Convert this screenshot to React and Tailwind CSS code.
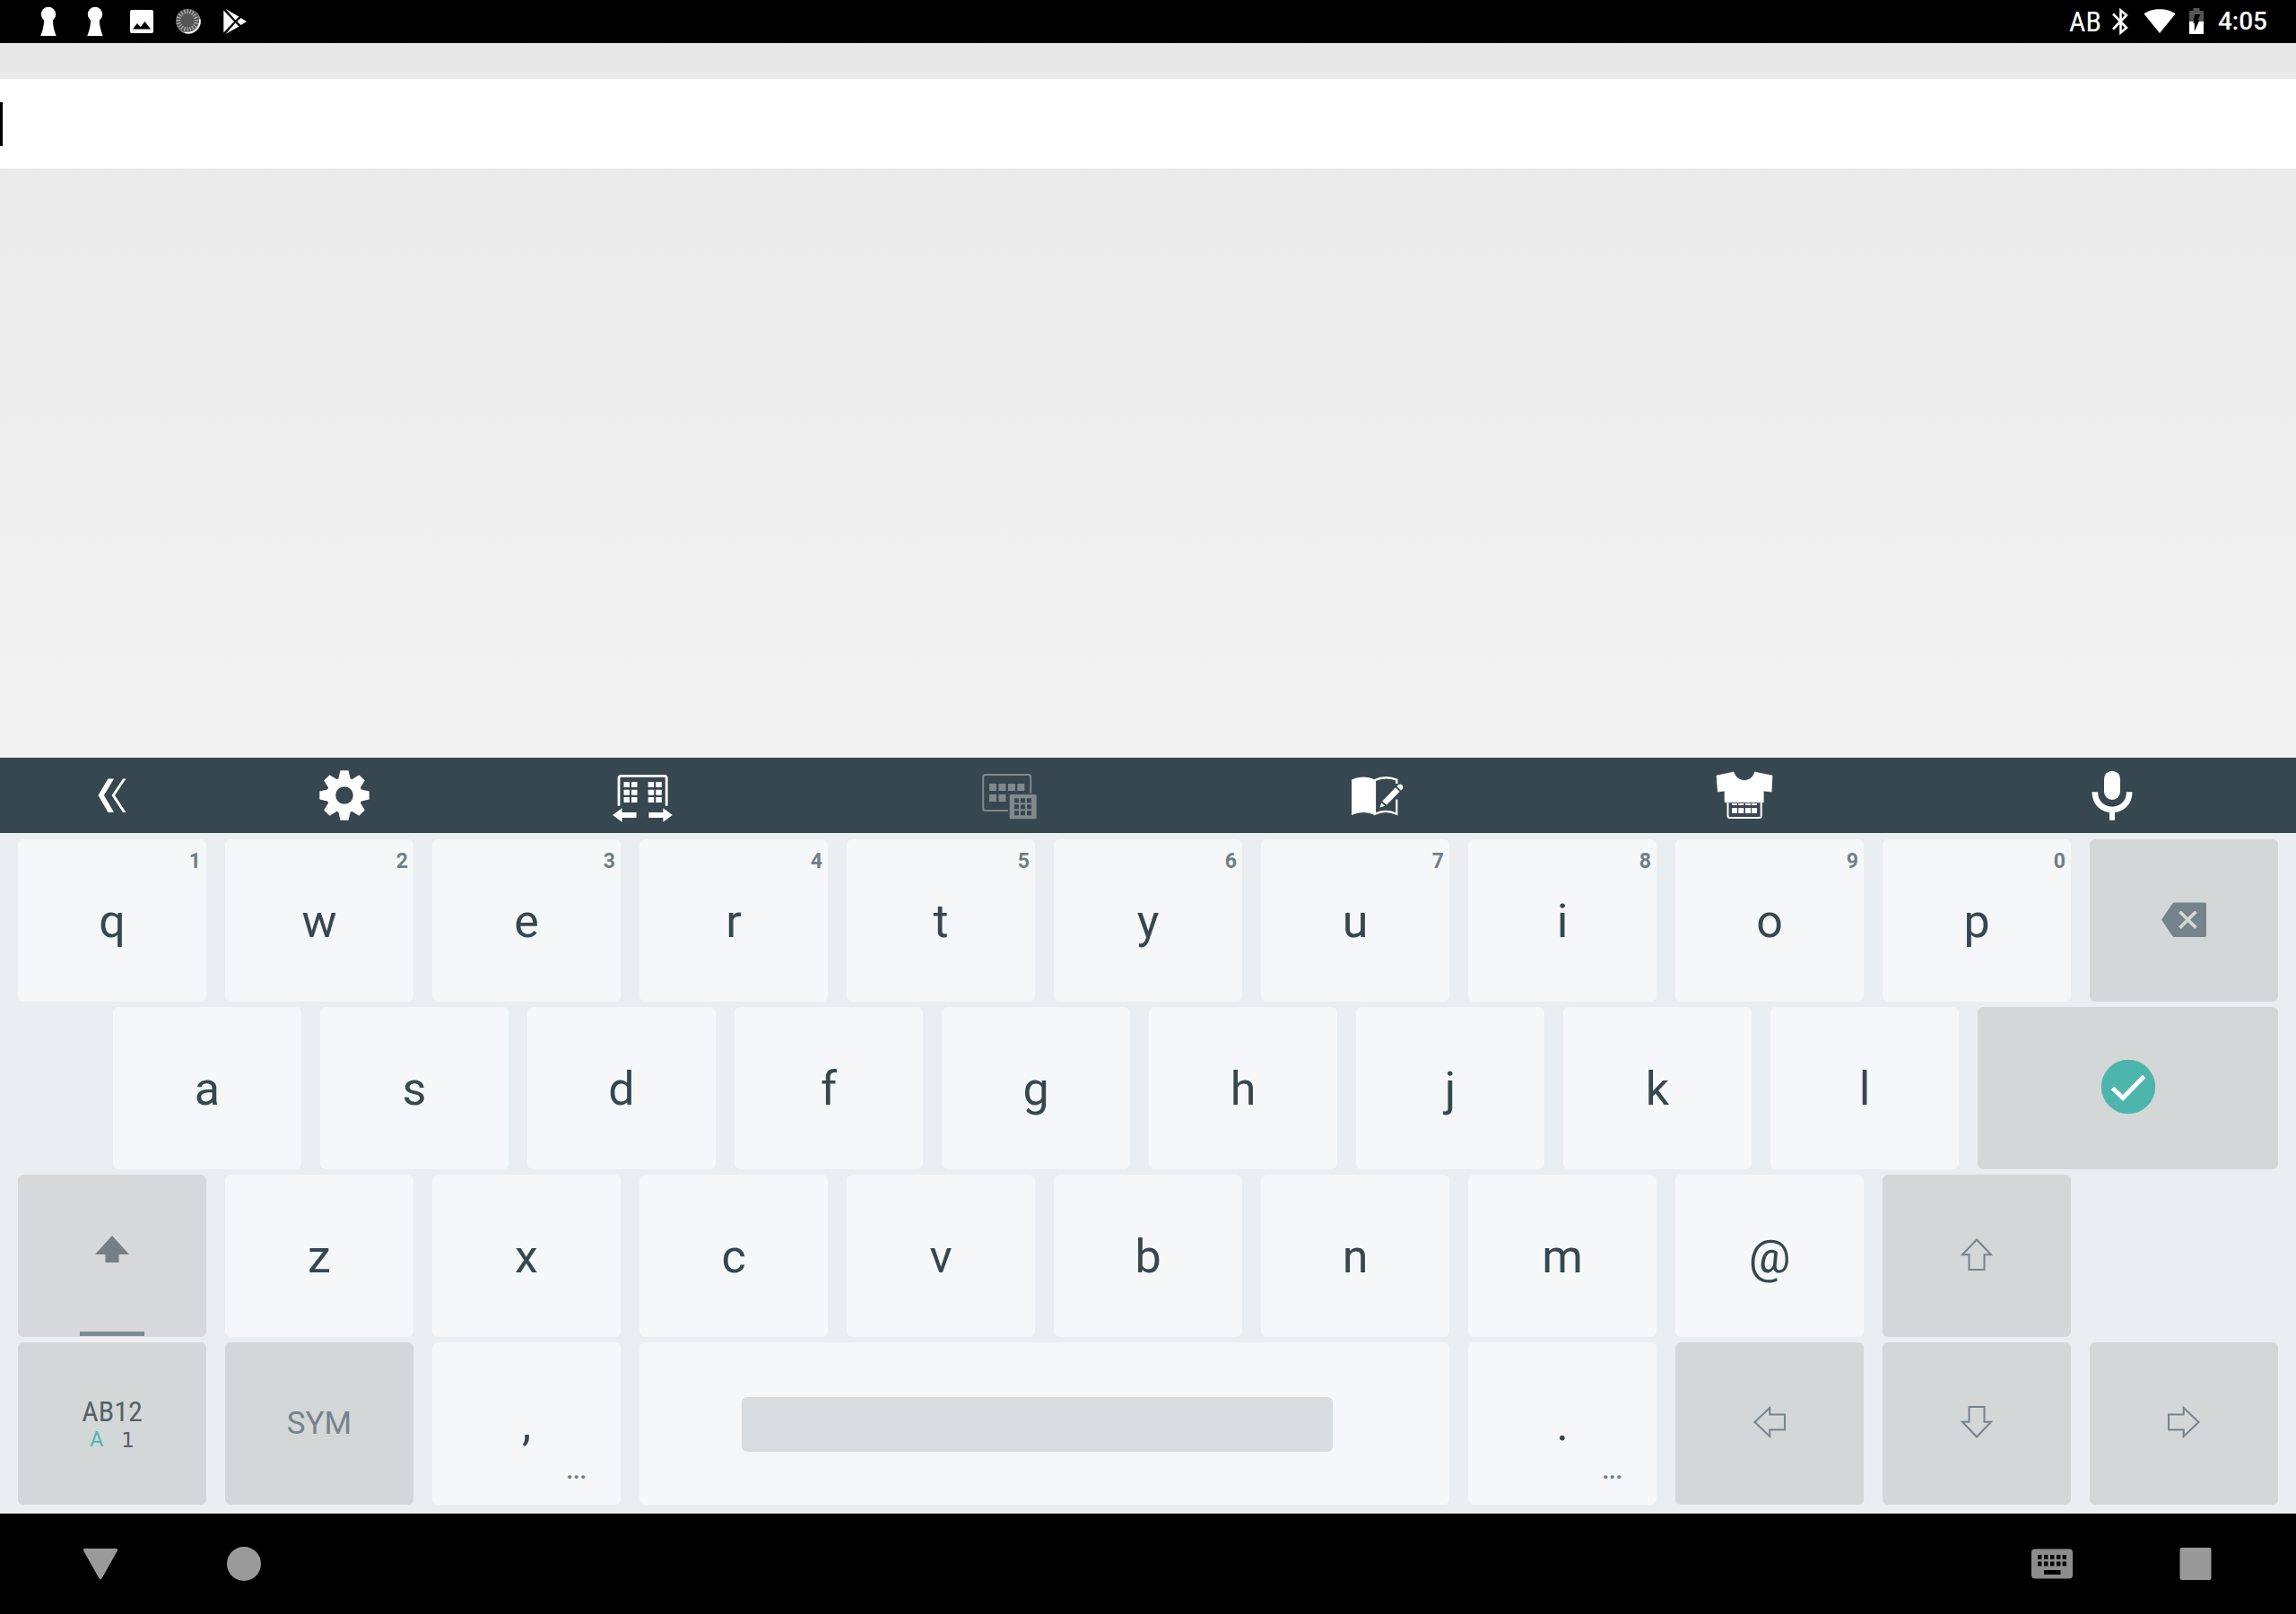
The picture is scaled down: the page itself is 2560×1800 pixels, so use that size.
import React from "react";

const TEETH = [0, 45, 90, 135, 180, 225, 270, 315];
const TICKS = Array.from({ length: 20 }, (_, i) => i * 18);

/* ---------- status bar icons ---------- */

function KeyholeIcon() {
  return (
    <svg className="h-12 w-[52px]" viewBox="0 0 52 48" fill="#fff" aria-hidden="true">
      <circle cx="26" cy="16" r="8.2" />
      <path d="M21 20h10c-.5 8 1.500 14 3.700 20H17.300C19.500 34 21.500 28 21 20z" />
    </svg>
  );
}

function PictureIcon() {
  return (
    <svg className="h-12 w-[52px]" viewBox="0 0 52 48" aria-hidden="true">
      <rect x="13" y="11" width="26" height="26" rx="2" fill="#fff" />
      <path d="M16 32.500 21 26l3.800 4L29.500 24 36 32.500z" fill="#000" />
    </svg>
  );
}

function DialIcon() {
  return (
    <svg className="h-12 w-[52px]" viewBox="0 0 52 48" aria-hidden="true">
      <circle cx="26" cy="24" r="13.800" fill="#8a8a8a" />
      <path d="M38.300 21.500a12.500 12.500 0 0 1-16.300 14" fill="none" stroke="#fff" strokeWidth="2.400" />
      <circle cx="25" cy="22.800" r="13" fill="#555" />
      <g stroke="#b5b5b5" strokeWidth="1.200">
        {TICKS.map((a) => (
          <path key={a} d="M25 10.300v4.700" transform={`rotate(${a} 25 22.800)`} />
        ))}
      </g>
    </svg>
  );
}

function PlayStoreIcon() {
  return (
    <svg className="h-12 w-[52px]" viewBox="0 0 52 48" aria-hidden="true">
      <g fill="#fff">
        <path d="M13.300 11.500 25 24 13.300 36.500z" />
        <path d="M15.500 10 30.500 18.500 26.500 22.500z" />
        <path d="M15.500 38 30.500 29.500 26.500 25.500z" />
        <path d="M28.300 24 32.500 20 39 24l-6.500 4z" />
      </g>
    </svg>
  );
}

function BluetoothIcon() {
  return (
    <svg className="h-12 w-[18px]" viewBox="0 0 18 48" fill="none" stroke="#fff" strokeWidth="2.600" aria-hidden="true">
      <path d="M1 15.500 16 31l-6.500 5.500v-25L16 17 1 32.500" />
    </svg>
  );
}

function WifiIcon() {
  return (
    <svg className="h-12 w-9" viewBox="0 0 36 48" fill="#fff" aria-hidden="true">
      <path d="M.5 15.500C9 8.500 27 8.500 35.500 15.500L18 37z" />
    </svg>
  );
}

function BatteryIcon() {
  return (
    <svg className="h-12 w-4" viewBox="0 0 16 48" aria-hidden="true">
      <path d="M4.500 9h7v3H15q1 0 1 1v11H0V13q0-1 1-1h3.500z" fill="#555" />
      <path d="M0 24h16v13q0 1-1 1H1q-1 0-1-1z" fill="#fff" />
      <path d="M6 16h6.500L9.500 22.500H11.500L5.800 35V26H4.500z" fill="#000" />
    </svg>
  );
}

/* ---------- toolbar icons ---------- */

function CollapseIcon() {
  return (
    <svg className="size-16" viewBox="93 855 64 64" fill="#fff" aria-hidden="true">
      <path d="M120.500 868.500h6.500L116 887l11 19h-6.500L109.500 887z" />
      <path d="M137 868.500h3.500L128 887l12.500 19H137L124.500 887z" />
    </svg>
  );
}

function GearIcon() {
  return (
    <svg className="ml-2 size-16" viewBox="-32 -32 64 64" aria-hidden="true">
      <g fill="#fff">
        <circle r="19.800" />
        {TEETH.map((a) => (
          <path key={a} d="M-7-17 -4.500-27.700h9L7-17z" transform={`rotate(${a})`} />
        ))}
      </g>
      <circle r="9.800" fill="#37474f" />
    </svg>
  );
}

function SplitKeyboardIcon() {
  return (
    <svg className="h-16 w-[70px]" viewBox="680 855 70 64" fill="#fff" aria-hidden="true">
      <path d="M690 898.700V868q0-2.600 2.600-2.600h48q2.600 0 2.600 2.600v30.700" fill="none" stroke="#fff" strokeWidth="2.800" />
      {[872, 880.7, 889].map((y) =>
        [695.5, 704, 722.7, 731.3].map((x) => (
          <rect key={`${x}-${y}`} x={x} y={y} width="6.500" height="6" rx="0.500" />
        )),
      )}
      <path d="M683 909l10.600-7.700v4.700h16v6h-16v4.700z" />
      <path d="M749.800 909l-10.400-7.700v4.700h-16v6h16v4.700z" />
    </svg>
  );
}

function FloatingKeyboardIcon() {
  return (
    <svg className="size-16" viewBox="1093 855 64 64" fill="#81898c" aria-hidden="true">
      <rect x="1096.200" y="864" width="53" height="40" rx="2.500" fill="none" stroke="#81898c" strokeWidth="2" />
      {[1103, 1113.5, 1124, 1134.3].map((x) => (
        <rect key={x} x={x} y="874" width="8" height="8" />
      ))}
      {[1103, 1113.5].map((x) => (
        <rect key={x} x={x} y="886" width="8" height="8" />
      ))}
      <rect x="1124" y="884.500" width="34" height="31" fill="#37474f" />
      <rect x="1125.700" y="886" width="30" height="27.300" rx="1.500" />
      {[890.3, 897.3, 904.3].map((y) =>
        [1131, 1138, 1145].map((x) => (
          <rect key={`${x}-${y}`} x={x} y={y} width="5" height="5" fill="#37474f" />
        )),
      )}
    </svg>
  );
}

function BookPencilIcon() {
  return (
    <svg className="size-16" viewBox="1503 855 64 64" aria-hidden="true">
      <path d="M1507 869.500Q1520 863.500 1533 869.500V909Q1520 903 1507 909z" fill="#fff" />
      <path d="M1533 870Q1545 864.500 1557.300 869.700V874" fill="none" stroke="#fff" strokeWidth="2.400" />
      <path d="M1557.300 891.500V907.700Q1545 902 1533 907.700V870" fill="none" stroke="#fff" strokeWidth="2.200" />
      <g fill="#fff">
        <path d="M1538.500 900.500l1.800-5.300 3.800 3.600z" />
        <path d="M1541.300 893.500 1556 878.200l4.700 4.600-14.700 15z" />
        <path d="M1557.300 876.800l1.700-1.600c3-2.300 7 1.500 4.600 4.900l-1.500 1.500z" />
      </g>
    </svg>
  );
}

function ThemeIcon() {
  return (
    <svg className="size-16" viewBox="1913 855 64 64" fill="#fff" aria-hidden="true">
      <path d="M1914 865 1933 861C1937 873.500 1953 873.500 1956.500 861L1976 865 1975.200 883 1966.300 882V894.800H1923V882L1915.300 883z" strokeLinejoin="round" stroke="#fff" strokeWidth="0.600" />
      <path d="M1926.500 895v15q0 2 2 2h33.200q2 0 2-2v-15" fill="none" stroke="#fff" strokeWidth="2" />
      {[1931, 1938.3, 1946, 1953].map((x) => (
        <g key={x}>
          <rect x={x} y="896" width="6" height="2" />
          <rect x={x} y="901" width="6" height="6" />
        </g>
      ))}
    </svg>
  );
}

function MicIcon() {
  return (
    <svg className="size-16" viewBox="2323 855 64 64" aria-hidden="true">
      <rect x="2346" y="859.700" width="18" height="32.300" rx="9" fill="#fff" />
      <path d="M2335.800 883.300C2335.800 909.500 2374.200 909.500 2374.200 883.300" fill="none" stroke="#fff" strokeWidth="6.600" />
      <rect x="2352" y="903" width="6" height="11.700" fill="#fff" />
    </svg>
  );
}

/* ---------- key icons ---------- */

function BackspaceIcon() {
  return (
    <svg className="mb-0.5 h-10 w-[50px]" viewBox="0 0 50 40" aria-hidden="true">
      <path d="M14.500.5h33.500q2 0 2 2V37q0 2-2 2H14.500q-1.500 0-2.500-1.500L0 19.700 12 2Q13 .5 14.500.5z" fill="#77838a" />
      <path d="M20.500 10.700l18 18m0-18l-18 18" stroke="#d3d7d8" strokeWidth="3.600" />
    </svg>
  );
}

function EnterIcon() {
  return (
    <svg className="mb-[3px] size-[62px]" viewBox="0 0 62 62" aria-hidden="true">
      <circle cx="31" cy="31" r="30.200" fill="#4db6ac" />
      <path d="M13.500 32.500 25 43.500 48.500 19.500" fill="none" stroke="#fff" strokeWidth="5" />
    </svg>
  );
}

function ShiftIcon() {
  return (
    <svg className="mb-4 h-[30px] w-[38px]" viewBox="0 0 38 30" fill="#757f85" aria-hidden="true">
      <path d="M19 0 38 21H26.500v9h-15v-9H0z" />
    </svg>
  );
}

function ArrowIcon({ turn }) {
  return (
    <svg className="mb-1 size-10" viewBox="-20 -20 40 40" fill="none" stroke="#76838a" strokeWidth="2" aria-hidden="true">
      <path d="M0-16.500 16 .3H8.500V17h-17V.3H-16z" transform={`rotate(${turn})`} />
    </svg>
  );
}

/* ---------- keyboard ---------- */

const SHADES = {
  light: "bg-[#f5f7f9] pt-0.5",
  dark: "bg-[#d3d7d8]",
  shift: "bg-[#d6d8da]",
};

const SPANS = {
  key: "grow-[210]",
  enter: "grow-[335]",
  space: "grow-[903]",
};

function Key({ label, shade = "light", span = "key", hint, more, children }) {
  return (
    <button
      type="button"
      aria-label={label}
      className={`relative flex min-w-0 basis-0 flex-col items-center justify-center rounded-md text-[52px] leading-[60px] text-[#37474f] ${SHADES[shade]} ${SPANS[span]}`}
    >
      {children}
      {hint && (
        <span className="absolute top-[13px] right-1.5 text-[23px] leading-6 font-bold text-[#717e84]">{hint}</span>
      )}
      {more && (
        <span className="absolute right-[38px] bottom-[26px] text-[26px] leading-6 font-bold text-[#717e84]">...</span>
      )}
    </button>
  );
}

function Row({ children }) {
  return <div className="flex h-[181px] gap-[21px]">{children}</div>;
}

function Letters({ text }) {
  return text.split("").map((c) => (
    <Key key={c} label={c}>
      {c}
    </Key>
  ));
}

function ToolButton({ label, className, children }) {
  return (
    <button type="button" aria-label={label} className={`flex basis-0 items-center justify-center ${className}`}>
      {children}
    </button>
  );
}

function NavButton({ label, children }) {
  return (
    <button type="button" aria-label={label} className="flex h-full w-40 items-center justify-center">
      {children}
    </button>
  );
}

export default function App() {
  return (
    <div className="flex min-h-screen flex-col bg-black font-['Roboto',sans-serif]">
      <header className="flex h-12 items-center justify-between bg-black pr-8 pl-7 text-white">
        <div className="flex">
          <KeyholeIcon />
          <KeyholeIcon />
          <PictureIcon />
          <DialIcon />
          <PlayStoreIcon />
        </div>
        <div className="flex items-center">
          <span className="mr-3 font-['Roboto_Condensed','Liberation_Sans_Narrow','Roboto',sans-serif] text-[32px] leading-8">
            AB
          </span>
          <BluetoothIcon />
          <span className="w-[17px]" />
          <WifiIcon />
          <span className="w-[15px]" />
          <BatteryIcon />
          <time className="ml-4 text-[28px] leading-8 font-medium">4:05</time>
        </div>
      </header>

      <main className="flex-1 bg-linear-to-b from-[#e8e8e8] to-[#f3f3f3] pt-10">
        <label className="flex h-[100px] items-center bg-white">
          <span className="h-[49px] w-[3px] bg-black" />
          <input type="text" aria-label="Text" className="h-full flex-1 bg-transparent text-[42px] outline-none" />
        </label>
      </main>

      <nav aria-label="Keyboard tools" className="flex h-[84px] bg-[#37474f]">
        <ToolButton label="Collapse" className="grow-[250]">
          <CollapseIcon />
        </ToolButton>
        <ToolButton label="Settings" className="grow-[260]">
          <GearIcon />
        </ToolButton>
        <ToolButton label="Split keyboard" className="grow-[410]">
          <SplitKeyboardIcon />
        </ToolButton>
        <ToolButton label="Floating keyboard" className="grow-[410]">
          <FloatingKeyboardIcon />
        </ToolButton>
        <ToolButton label="Dictionary" className="grow-[410]">
          <BookPencilIcon />
        </ToolButton>
        <ToolButton label="Theme" className="grow-[410]">
          <ThemeIcon />
        </ToolButton>
        <ToolButton label="Voice input" className="grow-[410]">
          <MicIcon />
        </ToolButton>
      </nav>

      <section aria-label="Keyboard" className="flex flex-col gap-1.5 bg-[#eaeef1] px-5 pt-[7px] pb-2.5">
        <Row>
          {"qwertyuiop".split("").map((c, i) => (
            <Key key={c} label={c} hint={String((i + 1) % 10)}>
              {c}
            </Key>
          ))}
          <Key label="Backspace" shade="dark">
            <BackspaceIcon />
          </Key>
        </Row>
        <Row>
          <span className="grow-[85] basis-0" />
          <Letters text="asdfghjkl" />
          <Key label="Enter" shade="dark" span="enter">
            <EnterIcon />
          </Key>
        </Row>
        <Row>
          <Key label="Shift" shade="shift">
            <ShiftIcon />
            <span className="absolute bottom-px h-[5px] w-[72px] bg-[#808b91]" />
          </Key>
          <Letters text="zxcvbnm@" />
          <Key label="Up" shade="dark">
            <ArrowIcon turn={0} />
          </Key>
          <span className="grow-[210] basis-0" />
        </Row>
        <Row>
          <Key label="Input mode" shade="dark">
            <span className="font-['Roboto_Condensed','Liberation_Sans_Narrow','Roboto',sans-serif] text-[32px] leading-9 text-[#546168]">
              AB12
            </span>
            <span className="flex gap-5 text-[23px] leading-7">
              <span className="text-[#4db6ac]">A</span>
              <span className="font-['DejaVu_Sans',sans-serif] text-[#546168]">1</span>
            </span>
          </Key>
          <Key label="Symbols" shade="dark">
            <span className="text-[35px] leading-10 text-[#76838a]">SYM</span>
          </Key>
          <Key label="Comma" more>
            ,
          </Key>
          <Key label="Space" span="space">
            <span className="mr-4 h-[61px] w-[73%] rounded-md bg-[#d8dcdf]" />
          </Key>
          <Key label="Period" more>
            .
          </Key>
          <Key label="Left" shade="dark">
            <ArrowIcon turn={270} />
          </Key>
          <Key label="Down" shade="dark">
            <ArrowIcon turn={180} />
          </Key>
          <Key label="Right" shade="dark">
            <ArrowIcon turn={90} />
          </Key>
        </Row>
      </section>

      <footer className="flex h-28 items-center justify-between bg-black px-8">
        <div className="flex h-full">
          <NavButton label="Back">
            <svg className="size-10" viewBox="0 0 40 40" fill="#9a9a9a" aria-hidden="true">
              <path d="M3 3h34q3 0 1.700 2.700L22 35.500q-2 3.500-4 0L1.300 5.700Q0 3 3 3z" />
            </svg>
          </NavButton>
          <NavButton label="Home">
            <svg className="size-10" viewBox="0 0 40 40" fill="#9a9a9a" aria-hidden="true">
              <circle cx="20" cy="20" r="19" />
            </svg>
          </NavButton>
        </div>
        <div className="flex h-full">
          <NavButton label="Switch keyboard">
            <svg className="h-[34px] w-[46px]" viewBox="0 0 46 34" aria-hidden="true">
              <rect y="0.500" width="46" height="33" rx="4" fill="#8c8c8c" />
              {[7, 14.5].map((y) =>
                [7, 14, 21, 28, 34.6].map((x) => <rect key={`${x}-${y}`} x={x} y={y} width="4.400" height="5" />),
              )}
              <rect x="14" y="24" width="18.500" height="5" />
            </svg>
          </NavButton>
          <NavButton label="Recent apps">
            <svg className="size-9" viewBox="0 0 36 36" fill="#999" aria-hidden="true">
              <rect x="0.500" width="35" height="36" rx="2" />
            </svg>
          </NavButton>
        </div>
      </footer>
    </div>
  );
}
